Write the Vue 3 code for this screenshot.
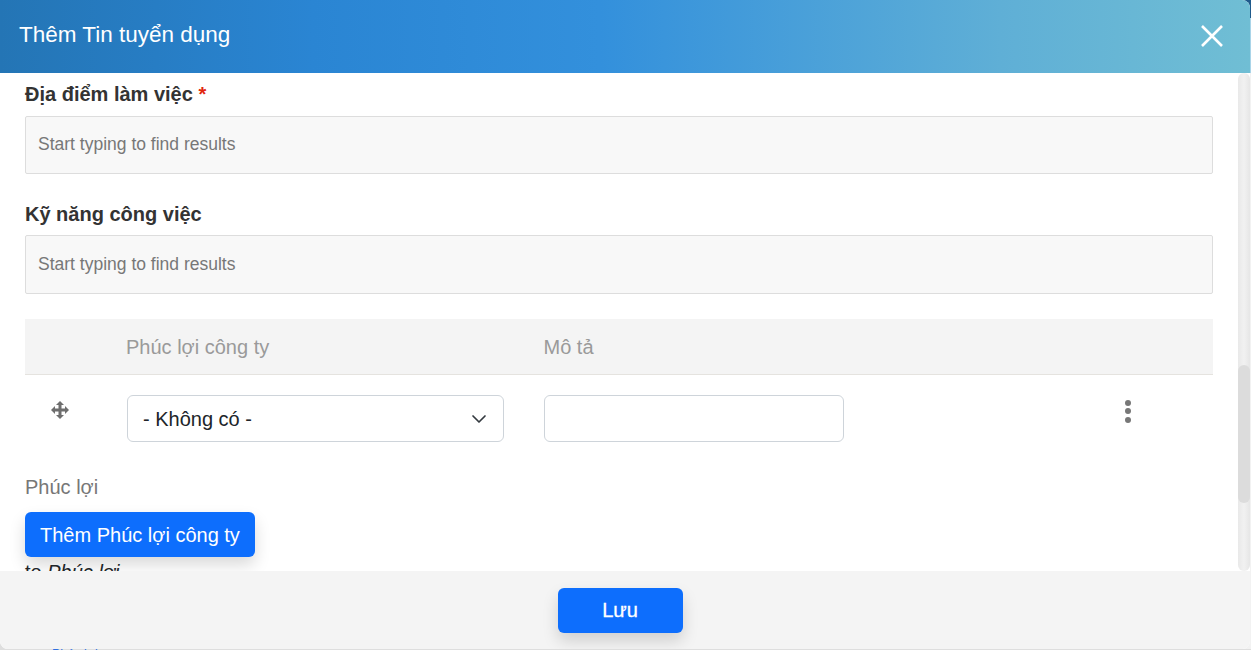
<script setup>
const rows = [
  { label: 'Địa điểm làm việc', required: true, cls: 'first', inputCls: '' },
  { label: 'Kỹ năng công việc', required: false, cls: 'second', inputCls: 'tall' },
];
</script>

<template>
  <div class="stage">
    <div class="edge"></div>
    <div class="peek">Phúc lợi</div>
    <div class="modal">
      <header class="head">
        <h2 class="title">Thêm Tin tuyển dụng</h2>
        <svg class="close" width="24" height="24" viewBox="0 0 24 24" aria-label="Đóng">
          <path d="M2 2 L22 22 M22 2 L2 22" stroke="#fff" stroke-width="2.6" fill="none" />
        </svg>
      </header>
      <div class="body">
        <div class="scroll">
          <div v-for="r in rows" :key="r.label" class="field" :class="r.cls">
            <label class="lbl">{{ r.label }}<span v-if="r.required" class="req"> *</span></label>
            <div class="inp" :class="r.inputCls">Start typing to find results</div>
          </div>
          <div class="table">
            <div class="thead">
              <div class="c-drag"></div>
              <div class="c-a">Phúc lợi công ty</div>
              <div class="c-b">Mô tả</div>
            </div>
            <div class="trow">
              <div class="c-drag">
                <svg width="18" height="18" viewBox="1 1 18 18" class="move">
                  <path fill="#6e6e6e" d="M10 1 L14 5 H11.5 V8.5 H15 V6 L19 10 L15 14 V11.5 H11.5 V15 H14 L10 19 L6 15 H8.5 V11.5 H5 V14 L1 10 L5 6 V8.5 H8.5 V5 H6 Z" />
                </svg>
              </div>
              <div class="c-a">
                <div class="select">
                  <span>- Không có -</span>
                  <svg width="16" height="16" viewBox="0 0 16 16"><path d="M2 5 L8 11 L14 5" fill="none" stroke="#343a40" stroke-width="1.7" stroke-linecap="round" stroke-linejoin="round" /></svg>
                </div>
              </div>
              <div class="c-b"><div class="text"></div></div>
              <div class="c-menu"><i></i><i></i><i></i></div>
            </div>
          </div>
          <div class="pl">Phúc lợi</div>
          <button class="add">Thêm Phúc lợi công ty</button>
          <div class="to">to <em>Phúc lợi</em></div>
        </div>
        <div class="bar"><div class="thumb"></div></div>
      </div>
      <footer class="foot">
        <button class="save">Lưu</button>
      </footer>
    </div>
  </div>
</template>

<style>
html, body { margin: 0; background: #fff; overflow: hidden; }
</style>

<style scoped>
.stage { position: relative; width: 1251px; height: 650px; overflow: hidden; background: #dedede; font-family: "Liberation Sans", Arial, sans-serif; }
.edge { position: absolute; right: 0; top: 0; width: 10px; height: 649px; background: linear-gradient(180deg, #1f5a8c 0, #1f5a8c 18px, #a9d4e8 18px, #a9d4e8 73px, #f2f2f2 73px); }
.peek { position: absolute; left: 52px; top: 646px; font-size: 12.5px; line-height: 16px; color: #2f6fe0; }
.modal { position: relative; width: 1250px; height: 649px; display: flex; flex-direction: column; border-radius: 0 8px 8px 8px; overflow: hidden; background: #fff; }
.head { height: 73px; flex: none; display: flex; align-items: center; justify-content: space-between; padding: 0 26px 1px 19px; box-sizing: border-box; background: linear-gradient(90deg, #2475b5 0%, #2a85d3 25%, #3390dc 48%, #5fafd6 80%, #70bed4 100%); }
.title { margin: 0 0 2px; font-size: 22.5px; font-weight: 400; color: #fff; line-height: 28px; }
.close { display: block; }
.body { flex: 1; min-height: 0; position: relative; display: flex; overflow: hidden; }
.scroll { flex: 1; min-width: 0; padding: 0 37px 0 25px; overflow: hidden; color: #212529; }
.field { display: flex; flex-direction: column; }
.first { margin-top: 9px; }
.second { margin-top: 28px; }
.lbl { font-size: 20px; font-weight: 700; color: #333; line-height: 24px; margin-bottom: 10px; }
.second .lbl { margin-bottom: 9px; }
.req { color: #e1260e; }
.inp { height: 54px; border: 1px solid #ddd; border-radius: 2px; background: #f8f8f8; padding: 0 12px 2px; display: flex; align-items: center; font-size: 17.5px; color: #777; box-sizing: content-box; }
.inp.tall { height: 57px; padding-bottom: 0; }
.table { margin-top: 25px; }
.thead { display: flex; align-items: center; background: #f4f4f4; border-bottom: 1px solid #e5e3df; font-size: 20px; color: #9a9a9a; padding-top: 2px; box-sizing: content-box; height: 53px; }
.trow { height: 96px; display: flex; align-items: flex-start; }
.c-drag { width: 101px; flex: none; }
.thead .c-a { width: 417.5px; flex: none; }
.trow .c-a { width: 418px; flex: none; box-sizing: border-box; }
.move { display: block; margin: 26px 0 0 26px; }
.select { margin-top: 20px; margin-left: 1px; width: 377px; height: 47px; box-sizing: border-box; border: 1px solid #ced4da; border-radius: 6px; display: flex; align-items: center; justify-content: space-between; padding: 2px 16px 0 15px; font-size: 20px; color: #212529; background: #fff; }
.select svg { display: block; margin-top: -2px; }
.c-b { flex: none; }
.trow .c-b { width: 300px; }
.text { margin-top: 20px; width: 300px; height: 47px; box-sizing: border-box; border: 1px solid #ced4da; border-radius: 6px; background: #fff; }
.c-menu { margin-left: 281px; margin-top: 25px; display: flex; flex-direction: column; gap: 3px; }
.c-menu i { display: block; width: 6px; height: 6px; border-radius: 50%; background: #777; margin-bottom: -0.6px; }
.pl { margin-top: 4px; font-size: 20px; color: #777; line-height: 24px; }
.add { display: block; margin-top: 13px; height: 45px; padding: 1px 15px 0; border: 0; border-radius: 6px; background: #0d6efd; color: #fff; font: 400 20px "Liberation Sans", Arial, sans-serif; box-shadow: 0 8px 16px rgba(0,0,0,.15); }
.to { font-size: 20px; color: #212529; line-height: 24px; margin-top: 3px; }
.bar { position: absolute; right: 0; top: 0; bottom: 0; width: 12px; border-radius: 6px; background: linear-gradient(90deg, #e9e9e9, #f1f1f1 50%, #e6e6e6); }
.thumb { position: absolute; left: 0; right: 0; top: 292px; height: 138px; background: #dcdcdc; border-radius: 6px; }
.foot { height: 78px; flex: none; position: relative; background: #f4f4f4; display: flex; justify-content: center; align-items: flex-start; padding: 17px 10px 0 0; box-sizing: border-box; }
.save { width: 125px; height: 45px; border: 0; border-radius: 6px; background: #0d6efd; color: #fff; font: 400 20px "Liberation Sans", Arial, sans-serif; -webkit-text-stroke: 0.3px #fff; box-shadow: 0 8px 16px rgba(0,0,0,.15); }
</style>
